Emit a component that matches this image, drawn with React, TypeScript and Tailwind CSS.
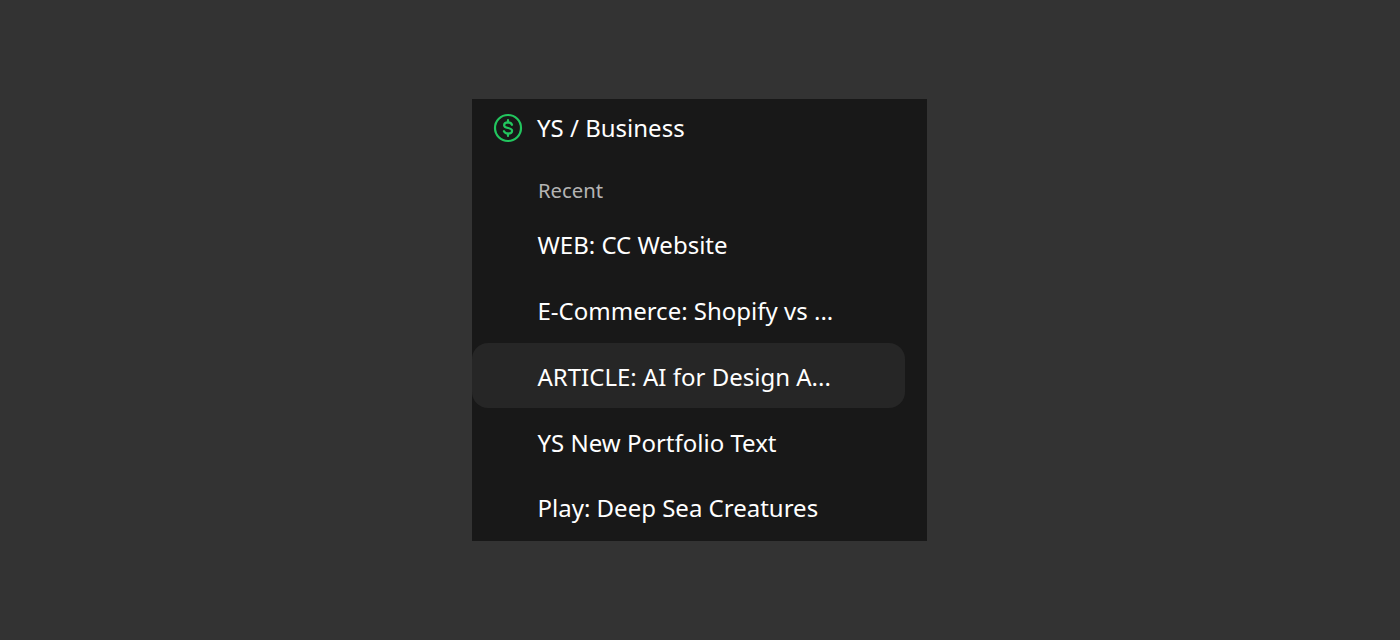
const recent = [
  'WEB: CC Website',
  'E-Commerce: Shopify vs ...',
  'ARTICLE: AI for Design A...',
  'YS New Portfolio Text',
  'Play: Deep Sea Creatures',
];

function DollarIcon() {
  return (
    <svg width="30" height="30" viewBox="0 0 30 30" fill="none" stroke="#22c55e" strokeWidth="2.200" strokeLinecap="round" strokeLinejoin="round" className="shrink-0 -mt-px">
      <circle cx="15" cy="15" r="13" />
      <path d="M19 11.800c-.5-1.500-2-2.400-4-2.400-2.300 0-3.900 1.100-3.900 2.800 0 3.900 8 1.700 8 5.600 0 1.700-1.800 2.800-4.100 2.800-2 0-3.500-.9-4.100-2.400" />
      <path d="M15 7v2.400M15 20.600V23" />
    </svg>
  );
}

export default function App() {
  return (
    <div className="h-[640px] bg-[#333333] flex items-center justify-center pr-px font-['Noto_Sans',sans-serif]">
      <div className="w-[455px] h-[442px] bg-[#181818] flex flex-col">
        <div className="h-[58px] shrink-0 flex items-center gap-[14px] pl-[21px] text-white text-[24px]">
          <DollarIcon />
          <span>YS / Business</span>
        </div>
        <div className="h-[54px] shrink-0 pt-[12px] flex items-center pl-[66px] text-[20.300px] text-[#b4b4b4]">Recent</div>
        <div className="flex flex-col">
          {recent.map((item, i) => (
            <div
              key={item}
              className={
                i === 2
                  ? 'w-[433px] h-[65.750px] shrink-0 flex items-center pl-[65.500px] pt-[3px] text-[24px] text-white rounded-[16px] bg-[#262626]'
                  : 'w-[433px] h-[65.750px] shrink-0 flex items-center pl-[65.500px] pt-[3px] text-[24px] text-white rounded-[16px]'
              }
            >
              {item}
            </div>
          ))}
        </div>
      </div>
    </div>
  );
}
